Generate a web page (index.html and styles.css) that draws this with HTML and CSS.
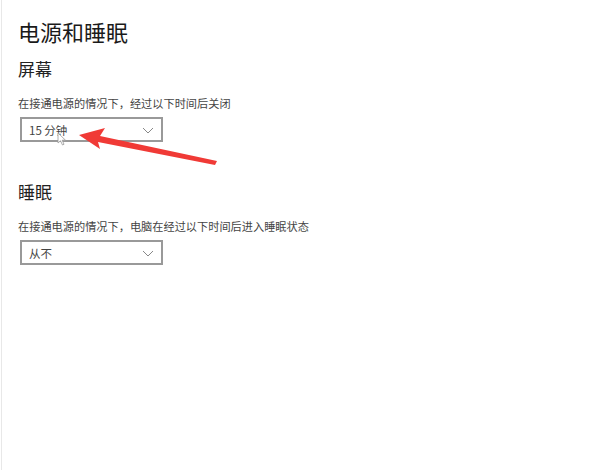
FILE: index.html
```html
<!DOCTYPE html>
<html lang="zh-CN">
<head>
    <meta charset="UTF-8">
    <title>电源和睡眠</title>
    <link rel="stylesheet" href="styles.css">
</head>
<body>
    <div class="page">
        <h1>电源和睡眠</h1>

        <h2>屏幕</h2>
        <div class="desc">在接通电源的情况下，经过以下时间后关闭</div>
        <div class="dropdown">
            <span>15 分钟</span>
            <svg class="chev" width="12" height="7" viewBox="0 0 12 7"><path d="M1 1 L6 6 L11 1" fill="none" stroke="#888" stroke-width="1"/></svg>
        </div>

        <h2 class="sleep">睡眠</h2>
        <div class="desc">在接通电源的情况下，电脑在经过以下时间后进入睡眠状态</div>
        <div class="dropdown">
            <span>从不</span>
            <svg class="chev" width="12" height="7" viewBox="0 0 12 7"><path d="M1 1 L6 6 L11 1" fill="none" stroke="#888" stroke-width="1"/></svg>
        </div>

        <!-- cursor + annotation arrow drawn over the screenshot -->
        <svg class="cursor" width="10" height="14" viewBox="0 0 10 14"><path d="M1 1 L1 11 L3.5 8.8 L5.5 13 L7 12.3 L5.2 8.2 L8.5 8.2 Z" fill="#fff" stroke="#999" stroke-width="0.8"/></svg>
        <svg class="arrow" width="602" height="470" viewBox="0 0 602 470"><polygon points="78,135 104,128 99,136 216,161 214,165 97,142 99,149" fill="#f03a36"/></svg>
    </div>
</body>
</html>
```

FILE: styles.css
```css
* { box-sizing: border-box; }
body {
    margin: 0;
    background: #fff;
    font-family: "Noto Sans CJK SC", "Noto Sans", sans-serif;
    color: #1a1a1a;
}
.page {
    position: relative;
    height: 470px;
    padding: 14px 0 0 16px;
    border-left: 1px solid #e8e8e8;
    margin-left: 1px;
}
h1 {
    margin: 0;
    font-size: 22px;
    font-weight: 400;
    line-height: 34px;
}
h2 {
    margin: 8px 0 0;
    font-size: 17px;
    font-weight: 400;
    line-height: 26px;
    color: #222;
}
h2.sleep { margin-top: 37px; }
.desc {
    margin-top: 13px;
    font-size: 11.2px;
    line-height: 16px;
    color: #444;
}
.dropdown {
    margin-top: 6px;
    margin-left: 2px;
    width: 143px;
    height: 25px;
    border: 2px solid #999;
    display: flex;
    align-items: center;
    justify-content: space-between;
    padding: 0 7px 0 7px;
    font-size: 11.5px;
    color: #444;
}
.chev { margin-top: 1px; }
.cursor {
    position: absolute;
    left: 55px;
    top: 132px;
}
.arrow {
    position: absolute;
    left: -1px;
    top: 0;
    pointer-events: none;
}
```
